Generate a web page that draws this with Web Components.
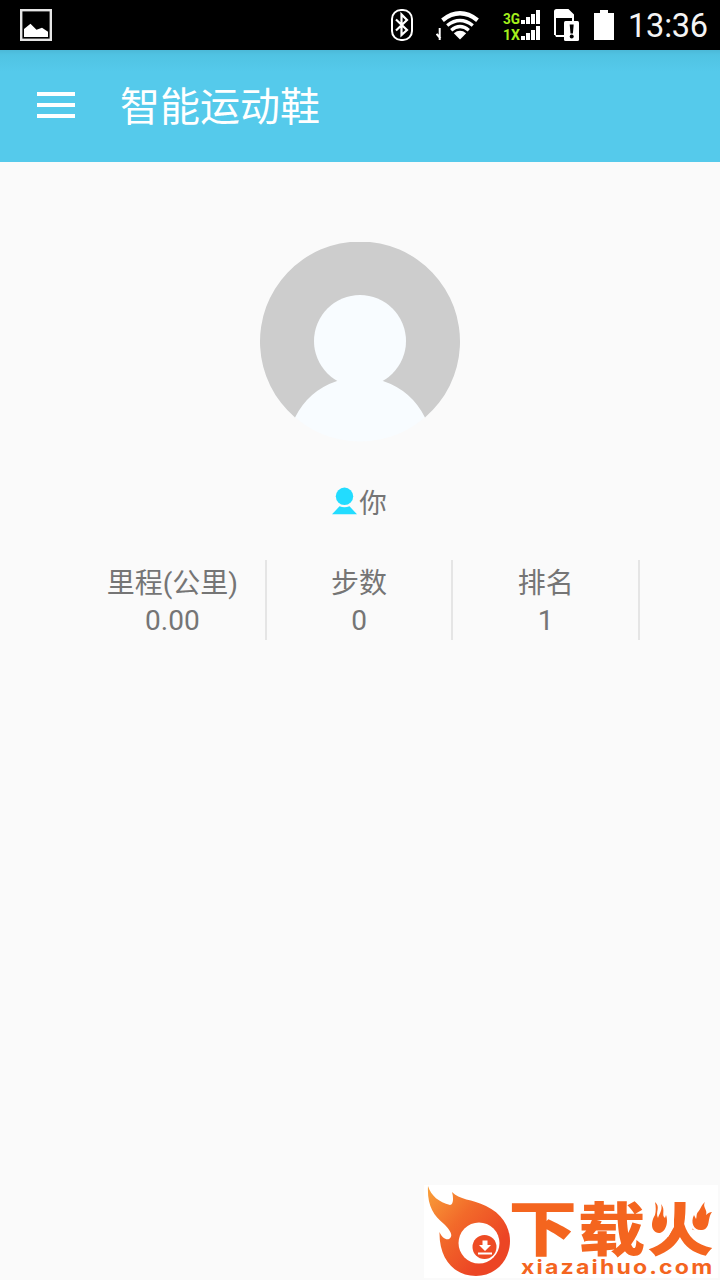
<!DOCTYPE html>
<html lang="zh-CN">
<head>
<meta charset="utf-8">
<title>智能运动鞋</title>
<style>
  body {
    margin: 0;
    background: #fafafa;
    font-family: Roboto, "Noto Sans CJK SC", sans-serif;
    color: #757575;
  }
</style>
</head>
<body>
<shoe-app></shoe-app>

<script>
class StatusBar extends HTMLElement {
  connectedCallback() {
    this.attachShadow({ mode: 'open' });
    this.shadowRoot.innerHTML = `
      <style>
        :host {
          display: flex;
          align-items: center;
          height: 50px;
          padding: 0 11px 0 20px;
          box-sizing: border-box;
          background: #000;
          color: #f4f4f4;
        }
        svg { display: block; flex: none; }
        .picture { margin-right: auto; }
        .bluetooth { margin-right: 23px; }
        .wifi { margin-right: 23px; }
        .signal { margin-right: 14px; overflow: visible; }
        .sim { margin-right: 15px; }
        .battery { margin-right: 14px; }
        .time {
          font-size: 32.5px;
          font-weight: 400;
          letter-spacing: -.2px;
          line-height: 50px;
          padding-top: 1px;
          box-sizing: border-box;
          height: 50px;
          width: 81px;
          white-space: nowrap;
        }
      </style>
      <svg class="picture" width="32" height="32" viewBox="0 0 32 32">
        <rect x="1.2" y="1.2" width="29.6" height="29.6" fill="none" stroke="#e6e6e6" stroke-width="2.4"/>
        <path d="M4 28v-8l6.500-5.200 6 6 5.500-2 6 4V28z" fill="#fff"/>
      </svg>
      <svg class="bluetooth" width="22" height="32" viewBox="0 0 22 32">
        <rect x="1" y="1" width="20" height="30" rx="9" fill="none" stroke="#fff" stroke-width="2"/>
        <path d="M5 10.500 16 21l-5.500 5V5.500L16 11 5 21.500" fill="none" stroke="#fff" stroke-width="2.200"/>
      </svg>
      <svg class="wifi" width="44" height="32" viewBox="0 0 44 32">
        <path d="M3.700 19v12M4.500 29.500.6 24.800" fill="none" stroke="#fff" stroke-width="2"/>
        <path d="M24 30.500 17.800 24.200Q24 19.500 30.200 24.200z" fill="#fff"/>
        <path d="M15.200 21.200Q24 14 32.800 21.200M11.200 16.500Q24 6.500 36.800 16.500" fill="none" stroke="#fff" stroke-width="3.400"/>
        <path d="M6.500 11.200Q24-2.500 41.500 11.200" fill="none" stroke="#fff" stroke-width="4.400"/>
      </svg>
      <svg class="signal" width="37" height="32" viewBox="0 0 37 32">
        <g fill="#a4f01c" font-family="Roboto, sans-serif" font-size="15" font-weight="700">
          <text x="0" y="14.500" textLength="17" lengthAdjust="spacingAndGlyphs">3G</text>
          <text x="0" y="31" textLength="17" lengthAdjust="spacingAndGlyphs">1X</text>
        </g>
        <path d="M18 11h4v4h-4zM23 8h4v7h-4zM28 5h4v10h-4zM33 1h4v14h-4zM18 27h4v4h-4zM23 24h4v7h-4zM28 21h4v10h-4zM33 17h4v14h-4z" fill="#fff"/>
      </svg>
      <svg class="sim" width="25" height="32" viewBox="0 0 25 32">
        <path d="M1 26V2.500Q1 1 2.500 1H14l5 5v8" fill="none" stroke="#fff" stroke-width="2"/>
        <path d="M2 1h12l6 6v2H1V2zM1 26h10v2H2z" fill="#fff"/>
        <rect x="10" y="12" width="15" height="20" rx="1.500" fill="#fff"/>
        <path d="M15.700 15.500h4l-.8 9h-2.400z" fill="#000"/>
        <circle cx="17.700" cy="27.500" r="2" fill="#000"/>
      </svg>
      <svg class="battery" width="20" height="30" viewBox="0 0 20 30">
        <path d="M0 3h6V0h8v3h6v27H0z" fill="#fff"/>
      </svg>
      <span class="time">13:36</span>
    `;
  }
}

class AppBar extends HTMLElement {
  connectedCallback() {
    this.attachShadow({ mode: 'open' });
    this.shadowRoot.innerHTML = `
      <style>
        :host {
          display: flex;
          align-items: center;
          height: 112px;
          padding-left: 37px;
          box-sizing: border-box;
          background: linear-gradient(#4cb9d8, #50c3e3 5px, #55caeb 22px);
          color: #fff;
        }
        svg { display: block; margin: 0 45px 2px 0; }
        h1 {
          margin: 0;
          padding-top: 3px;
          font-size: 40px;
          font-weight: 400;
          line-height: 60px;
        }
      </style>
      <svg width="38" height="26" viewBox="0 0 38 26">
        <path d="M0 0h38v4H0zM0 11h38v4H0zM0 22h38v4H0z" fill="#fff"/>
      </svg>
      <h1><slot></slot></h1>
    `;
  }
}

class UserProfile extends HTMLElement {
  connectedCallback() {
    this.attachShadow({ mode: 'open' });
    this.shadowRoot.innerHTML = `
      <style>
        :host {
          display: flex;
          flex-direction: column;
          align-items: center;
          padding-top: 80px;
        }
        svg { display: block; }
        .name {
          display: flex;
          align-items: center;
          gap: 2px;
          margin-top: 40px;
          margin-right: 1px;
          height: 38px;
          font-size: 27.5px;
        }
        .name span { line-height: 38px; padding-top: 6px; }
      </style>
      <svg width="200" height="200" viewBox="0 0 200 200">
        <circle cx="100" cy="100" r="99.500" fill="#f8fcff"/>
        <path d="M35 175.500A100 100 0 1 1 165 175.500A73 73 0 0 0 123 139H77A73 73 0 0 0 35 175.500z" fill="#cdcdcd"/>
        <circle cx="100" cy="99" r="46" fill="#f8fcff"/>
      </svg>
      <div class="name">
        <svg width="25" height="28" viewBox="0 0 25 28">
          <path d="M0 27.300l7.500-8q5 2 10 0l7.500 8z" fill="#22dcff"/>
          <circle cx="12.500" cy="9.300" r="8.700" fill="#22dcff"/>
        </svg>
        <span><slot></slot></span>
      </div>
    `;
  }
}

class StatItem extends HTMLElement {
  connectedCallback() {
    this.attachShadow({ mode: 'open' });
    this.shadowRoot.innerHTML = `
      <style>
        :host {
          flex: 1;
          height: 80px;
          box-sizing: border-box;
          padding-top: 5px;
          border-right: 2px solid #e5e5e5;
          text-align: center;
          font-size: 28px;
        }
        .label { height: 37px; line-height: 38px; }
        .value { height: 38px; line-height: 38px; }
      </style>
      <div class="label">${this.getAttribute('label')}</div>
      <div class="value">${this.getAttribute('value')}</div>
    `;
  }
}

class SiteLogo extends HTMLElement {
  connectedCallback() {
    this.attachShadow({ mode: 'open' });
    this.shadowRoot.innerHTML = `
      <style>
        :host {
          display: block;
          width: 294px;
          height: 93px;
          background: #fff;
        }
        svg { display: block; overflow: visible; }
        text { fill: #f4651f; }
      </style>
      <svg width="294" height="93" viewBox="0 0 294 93">
        <defs>
          <linearGradient id="fire" x1="0" y1="0" x2=".75" y2=".75">
            <stop offset="0" stop-color="#f9a13a"/>
            <stop offset=".5" stop-color="#f26a2a"/>
            <stop offset="1" stop-color="#ec4524"/>
          </linearGradient>
        </defs>
        <path d="M4 1C7 11 15 17 26 20 29 20 30 14 28 7 35 15 48 14 62 21 77 28 86 41 86 56 86 76 71 91 52 91 30 91 15 74 15.500 47 18 53 22 55 25 54 30 51 26 45 20 39 9 30 3 20 4 1z" fill="url(#fire)"/>
        <circle cx="55" cy="58" r="20.500" fill="#fff"/>
        <circle cx="60.500" cy="62" r="12" fill="#ee4b24"/>
        <path d="M58.500 55.500h5v4.500h3.500L61 66l-6-6h3.500zM54 67.500h14v2H54z" fill="#fff"/>
        <g font-family="Noto Sans CJK SC, sans-serif" font-size="60" font-weight="900">
          <text transform="translate(84.500 66) scale(1.140 1)">下</text>
          <text transform="translate(154 66) scale(1.120 .96)">载</text>
          <text transform="translate(223 66) scale(1.110 .96)">火</text>
        </g>
        <!-- flames in place of the two dots of the last character -->
        <path d="M224 14h26v28l-6 10h-20zM266 14h24v34h-18l-6-8z" fill="#fff"/>
        <g fill="#f4651f">
          <path d="M231 17c6 5 0 10 3 16 1-4 5-8 3-14 5 6 0 11 4 14l1-3c3 8-1 18-7 18-9-1-8-12-4-18 1-4 1-8 0-13z"/>
          <path d="M281 17c-3 5 3 8 1 13 2-2 4-3 6-3-5 6-1 17-10 18-8 1-12-7-8-15l2 4c1-2 0-5 2-7 3-3 3-7 7-10z"/>
        </g>
        <text transform="translate(97 88.500) scale(1.180 1)" font-family="Inter, sans-serif" font-size="19.500" font-weight="700" textLength="162">xiazaihuo.com</text>
      </svg>
    `;
  }
}

class ShoeApp extends HTMLElement {
  connectedCallback() {
    this.attachShadow({ mode: 'open' });
    this.shadowRoot.innerHTML = `
      <style>
        :host {
          display: flex;
          flex-direction: column;
          width: 720px;
          height: 1280px;
          overflow: hidden;
        }
        .stats { display: flex; margin: 40px 80px 0 80px; }
        site-logo { margin: auto 2px 2px auto; }
      </style>
      <status-bar></status-bar>
      <app-bar>智能运动鞋</app-bar>
      <user-profile>你</user-profile>
      <div class="stats">
        <stat-item label="里程(公里)" value="0.00"></stat-item>
        <stat-item label="步数" value="0"></stat-item>
        <stat-item label="排名" value="1"></stat-item>
      </div>
      <site-logo></site-logo>
    `;
  }
}

customElements.define('status-bar', StatusBar);
customElements.define('app-bar', AppBar);
customElements.define('user-profile', UserProfile);
customElements.define('stat-item', StatItem);
customElements.define('site-logo', SiteLogo);
customElements.define('shoe-app', ShoeApp);
</script>
</body>
</html>
